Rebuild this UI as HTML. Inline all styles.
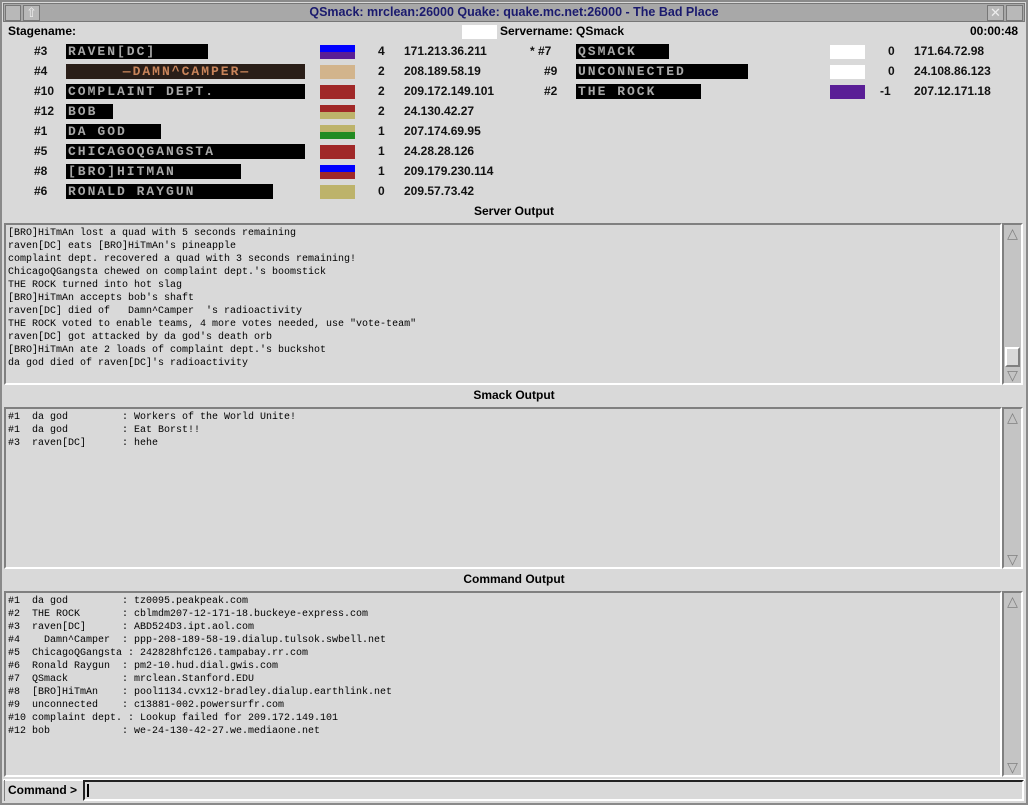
<!DOCTYPE html>
<html><head><meta charset="utf-8"><style>
*{margin:0;padding:0;box-sizing:border-box}
body{width:1028px;height:805px;background:#d9d9d9;font-family:"Liberation Sans",sans-serif;position:relative;overflow:hidden}
.a{position:absolute}
.lbl{font-size:12px;font-weight:bold;color:#000}
.n{font-size:12px;font-weight:bold;color:#111}
.nm{position:absolute;height:15px;background:#000;color:#a8a8a8;font:bold 13px/15px "Liberation Mono",monospace;letter-spacing:2px;text-transform:uppercase;padding-left:2px;overflow:hidden;white-space:nowrap}
.sw{position:absolute;width:35px;height:14px}
.box{position:absolute;left:4px;width:998px;background:#d9d9d9;border:2px solid;border-color:#808080 #fff #fff #808080}
.box pre{font:10px/13px "Liberation Mono",monospace;color:#000;padding:2px 0 0 2px}
.sb{position:absolute;left:1002px;width:21px;background:#c4c4c4;border:2px solid;border-color:#808080 #fff #fff #808080}
.ar{position:absolute;left:1px;width:15px;height:16px;color:#808080;font-size:14px;line-height:16px;text-align:center}
.ttl{position:absolute;left:0;width:1028px;text-align:center;font-size:12px;font-weight:bold}
</style></head><body>
<div class="a" style="left:0;top:0;width:1028px;height:805px;border:2px solid #8a8a8a"></div>
<div class="a" style="left:3px;top:3px;width:1022px;height:19px;background:#a8a8a8;border:1px solid #777"></div>
<div class="a" style="left:5px;top:5px;width:16px;height:16px;background:#b8b8b8;border:1px solid #777"></div>
<div class="a" style="left:23px;top:5px;width:17px;height:16px;background:#b8b8b8;border:1px solid #777;font-size:13px;line-height:14px;text-align:center;color:#eee">⇧</div>
<div class="a" style="left:987px;top:5px;width:17px;height:16px;background:#b8b8b8;border:1px solid #777;font-size:13px;line-height:14px;text-align:center;color:#eee">✕</div>
<div class="a" style="left:1006px;top:5px;width:17px;height:16px;background:#b8b8b8;border:1px solid #777"></div>
<div class="a" style="left:0;top:5px;width:1028px;text-align:center;font-size:12.5px;font-weight:bold;color:#1a1a6e;line-height:15px">QSmack: mrclean:26000 Quake: quake.mc.net:26000 - The Bad Place</div>

<div class="a lbl" style="left:8px;top:24px">Stagename:</div>
<div class="a" style="left:462px;top:25px;width:35px;height:14px;background:#fff"></div>
<div class="a lbl" style="left:500px;top:24px">Servername: QSmack</div>
<div class="a lbl" style="left:970px;top:24px">00:00:48</div>

<div class="a n" style="left:34px;top:44px">#3</div><div class="nm" style="left:66px;top:44px;width:142px">raven[DC]</div>
<div class="sw" style="left:320px;top:45px;background:linear-gradient(#0000ff 50%,#5a1e96 50%)"></div><div class="a n" style="left:378px;top:44px">4</div><div class="a n" style="left:404px;top:44px">171.213.36.211</div>

<div class="a n" style="left:34px;top:64px">#4</div><div class="nm" style="left:66px;top:64px;width:239px;color:#c8845a;background:#2a1e18;text-align:center">—Damn^Camper—</div>
<div class="sw" style="left:320px;top:65px;background:#d2b48c"></div><div class="a n" style="left:378px;top:64px">2</div><div class="a n" style="left:404px;top:64px">208.189.58.19</div>

<div class="a n" style="left:34px;top:84px">#10</div><div class="nm" style="left:66px;top:84px;width:239px">complaint dept.</div>
<div class="sw" style="left:320px;top:85px;background:#a02828"></div><div class="a n" style="left:378px;top:84px">2</div><div class="a n" style="left:404px;top:84px">209.172.149.101</div>

<div class="a n" style="left:34px;top:104px">#12</div><div class="nm" style="left:66px;top:104px;width:47px">bob</div>
<div class="sw" style="left:320px;top:105px;background:linear-gradient(#a02828 50%,#bdb36b 50%)"></div><div class="a n" style="left:378px;top:104px">2</div><div class="a n" style="left:404px;top:104px">24.130.42.27</div>

<div class="a n" style="left:34px;top:124px">#1</div><div class="nm" style="left:66px;top:124px;width:95px">da god</div>
<div class="sw" style="left:320px;top:125px;background:linear-gradient(#bdb36b 50%,#228b22 50%)"></div><div class="a n" style="left:378px;top:124px">1</div><div class="a n" style="left:404px;top:124px">207.174.69.95</div>

<div class="a n" style="left:34px;top:144px">#5</div><div class="nm" style="left:66px;top:144px;width:239px">ChicagoQGangsta</div>
<div class="sw" style="left:320px;top:145px;background:#a02828"></div><div class="a n" style="left:378px;top:144px">1</div><div class="a n" style="left:404px;top:144px">24.28.28.126</div>

<div class="a n" style="left:34px;top:164px">#8</div><div class="nm" style="left:66px;top:164px;width:175px">[BRO]HiTmAn</div>
<div class="sw" style="left:320px;top:165px;background:linear-gradient(#0000ff 50%,#a02828 50%)"></div><div class="a n" style="left:378px;top:164px">1</div><div class="a n" style="left:404px;top:164px">209.179.230.114</div>

<div class="a n" style="left:34px;top:184px">#6</div><div class="nm" style="left:66px;top:184px;width:207px">Ronald Raygun</div>
<div class="sw" style="left:320px;top:185px;background:#bdb36b"></div><div class="a n" style="left:378px;top:184px">0</div><div class="a n" style="left:404px;top:184px">209.57.73.42</div>

<div class="a n" style="left:530px;top:44px">* #7</div><div class="nm" style="left:576px;top:44px;width:93px">QSmack</div>
<div class="sw" style="left:830px;top:45px;background:#fff"></div><div class="a n" style="left:888px;top:44px">0</div><div class="a n" style="left:914px;top:44px">171.64.72.98</div>
<div class="a n" style="left:544px;top:64px">#9</div><div class="nm" style="left:576px;top:64px;width:172px">unconnected</div>
<div class="sw" style="left:830px;top:65px;background:#fff"></div><div class="a n" style="left:888px;top:64px">0</div><div class="a n" style="left:914px;top:64px">24.108.86.123</div>
<div class="a n" style="left:544px;top:84px">#2</div><div class="nm" style="left:576px;top:84px;width:125px">THE ROCK</div>
<div class="sw" style="left:830px;top:85px;background:#5a1e96"></div><div class="a n" style="left:880px;top:84px">-1</div><div class="a n" style="left:914px;top:84px">207.12.171.18</div>

<div class="ttl" style="top:204px">Server Output</div>
<div class="box" style="top:223px;height:162px"><pre>[BRO]HiTmAn lost a quad with 5 seconds remaining
raven[DC] eats [BRO]HiTmAn's pineapple
complaint dept. recovered a quad with 3 seconds remaining!
ChicagoQGangsta chewed on complaint dept.'s boomstick
THE ROCK turned into hot slag
[BRO]HiTmAn accepts bob's shaft
raven[DC] died of   Damn^Camper  's radioactivity
THE ROCK voted to enable teams, 4 more votes needed, use "vote-team"
raven[DC] got attacked by da god's death orb
[BRO]HiTmAn ate 2 loads of complaint dept.'s buckshot
da god died of raven[DC]'s radioactivity</pre></div>
<div class="sb" style="top:223px;height:162px"><div class="ar" style="top:0">△</div><div class="a" style="left:1px;top:122px;width:15px;height:20px;background:#d9d9d9;border:2px solid;border-color:#fff #808080 #808080 #fff"></div><div class="ar" style="top:142px">▽</div></div>

<div class="ttl" style="top:388px">Smack Output</div>
<div class="box" style="top:407px;height:162px"><pre>#1  da god         : Workers of the World Unite!
#1  da god         : Eat Borst!!
#3  raven[DC]      : hehe</pre></div>
<div class="sb" style="top:407px;height:162px"><div class="ar" style="top:0">△</div><div class="ar" style="top:142px">▽</div></div>

<div class="ttl" style="top:572px">Command Output</div>
<div class="box" style="top:591px;height:186px"><pre>#1  da god         : tz0095.peakpeak.com
#2  THE ROCK       : cblmdm207-12-171-18.buckeye-express.com
#3  raven[DC]      : ABD524D3.ipt.aol.com
#4    Damn^Camper  : ppp-208-189-58-19.dialup.tulsok.swbell.net
#5  ChicagoQGangsta : 242828hfc126.tampabay.rr.com
#6  Ronald Raygun  : pm2-10.hud.dial.gwis.com
#7  QSmack         : mrclean.Stanford.EDU
#8  [BRO]HiTmAn    : pool1134.cvx12-bradley.dialup.earthlink.net
#9  unconnected    : c13881-002.powersurfr.com
#10 complaint dept. : Lookup failed for 209.172.149.101
#12 bob            : we-24-130-42-27.we.mediaone.net</pre></div>
<div class="sb" style="top:591px;height:186px"><div class="ar" style="top:0">△</div><div class="ar" style="top:166px">▽</div></div>

<div class="a" style="left:3px;top:779px;width:1022px;height:2px;background:#fff"></div>
<div class="a" style="left:4px;top:780px;width:79px;height:21px;border-left:1px solid #808080"></div>
<div class="a lbl" style="left:8px;top:783px">Command &gt;</div>
<div class="a" style="left:83px;top:780px;width:941px;height:21px;border:2px solid;border-color:#222 #fff #fff #222;background:#d9d9d9"></div>
<div class="a" style="left:87px;top:784px;width:2px;height:13px;background:#000"></div>
</body></html>
